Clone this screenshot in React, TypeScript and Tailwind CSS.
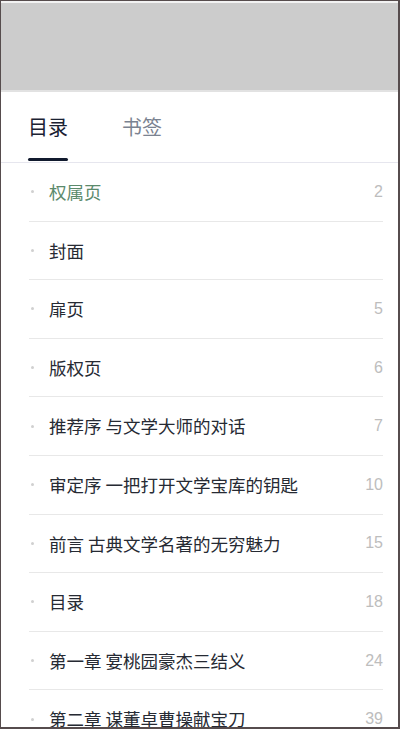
const items: { title: string; page?: number; active?: boolean }[] = [
  { title: '权属页', page: 2, active: true },
  { title: '封面' },
  { title: '扉页', page: 5 },
  { title: '版权页', page: 6 },
  { title: '推荐序 与文学大师的对话', page: 7 },
  { title: '审定序 一把打开文学宝库的钥匙', page: 10 },
  { title: '前言 古典文学名著的无穷魅力', page: 15 },
  { title: '目录', page: 18 },
  { title: '第一章 宴桃园豪杰三结义', page: 24 },
  { title: '第二章 谋董卓曹操献宝刀', page: 39 },
];

export default function App() {
  return (
    <div
      className="h-[729px] w-[400px] overflow-hidden border-t border-l border-b-2 border-r-2 border-[#564c4d] bg-white"
      style={{ fontFamily: '"Noto Sans CJK SC", "Liberation Sans", sans-serif' }}
    >
      <div className="h-[89px] border-t-2 border-[#f2f2f2] bg-[#cccccc]" />
      <div className="h-[2px] bg-[#e2e2e2]" />
      {/* tabs */}
      <div className="flex h-[71px] items-stretch border-b border-[#e6e6ee] px-[27px]">
        <div className="relative flex items-center">
          <span className="text-[20px] leading-none text-[#1b2233]">目录</span>
          <span className="absolute bottom-[1px] left-0 right-0 h-[3px] rounded-full bg-[#111a2e]" />
        </div>
        <div className="ml-[54px] flex items-center">
          <span className="text-[20px] leading-none text-[#7b8391]">书签</span>
        </div>
      </div>
      {/* list */}
      <ul className="pl-[28px] pr-[15px]">
        {items.map((item) => (
          <li key={item.title} className="flex h-[58.6px] items-center border-b border-[#e8e8e8]">
            <span className="ml-[2px] h-[3px] w-[3px] rounded-full bg-[#d0d0d0]" />
            <span
              className={
                'ml-[15px] flex-1 text-[17.5px] leading-none ' +
                (item.active ? 'text-[#5b8a6c]' : 'text-[#262a33]')
              }
            >
              {item.title}
            </span>
            {item.page !== undefined && (
              <span className="text-[16px] leading-none text-[#bdbdbd]" style={{ fontFamily: '"Liberation Sans", sans-serif' }}>
                {item.page}
              </span>
            )}
          </li>
        ))}
      </ul>
    </div>
  );
}
